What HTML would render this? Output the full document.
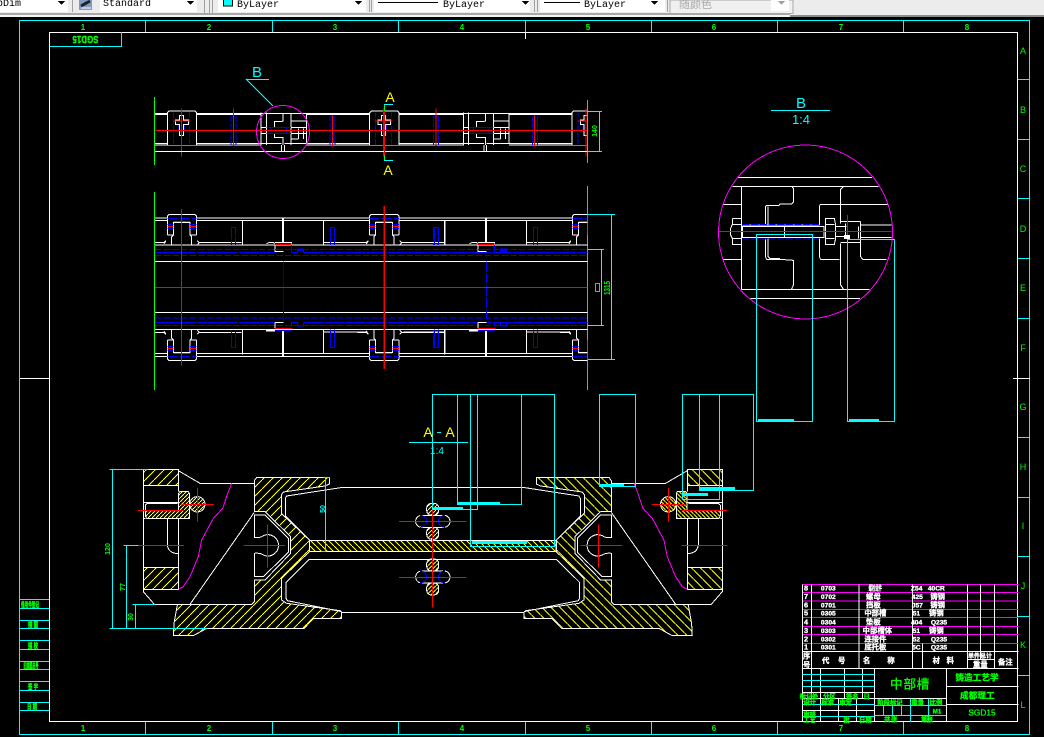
<!DOCTYPE html>
<html><head><meta charset="utf-8"><style>
html,body{margin:0;padding:0;background:#000;width:1044px;height:737px;overflow:hidden}
svg{display:block}
text{font-family:"Liberation Sans","Noto Sans CJK SC",sans-serif;shape-rendering:auto}
.m{font-family:"Liberation Mono","Noto Sans CJK SC",monospace;font-size:10px;fill:#000}
.g{fill:#00ff00;font-weight:bold;text-anchor:middle}
.w{fill:#fff;font-weight:bold;text-anchor:middle}
.c{fill:#00ffff;text-anchor:middle}
.y{fill:#ffff00;text-anchor:middle}
.hv{stroke:#00ff00;stroke-width:.4px}
</style></head><body>
<svg width="1044" height="737" viewBox="0 0 1044 737" xmlns="http://www.w3.org/2000/svg" shape-rendering="crispEdges">
<defs>
<pattern id="h1" patternUnits="userSpaceOnUse" width="27" height="27"><path d="M0 27L27 0" stroke="#ff0" stroke-width="3"/></pattern>
<pattern id="h2" patternUnits="userSpaceOnUse" width="18" height="18"><path d="M0 0L18 18" stroke="#ff0" stroke-width="3"/></pattern>
<pattern id="h3" patternUnits="userSpaceOnUse" width="12" height="12"><path d="M0 12L12 0" stroke="#ff0" stroke-width="3"/></pattern>
<clipPath id="topclip"><rect x="0" y="0" width="1296" height="210"/></clipPath>
<clipPath id="midclip"><rect x="45" y="0" width="1297" height="630"/></clipPath>

<g id="per12" fill="none" stroke-width="3">
  <path d="M0 57H37M125 57H318M455 57H607" stroke="#fff" stroke-width="6"/>
  <path d="M0 146H320M0 150H320M455 146H607M455 150H607M318 146H380M388 146H455M318 55H455" stroke="#fff"/>
  <path d="M37 150V53L42 48H120L125 53V150" stroke="#fff" fill="#000"/>
  <path d="M55 52V150M103 52V150" stroke="#00f" stroke-dasharray="16 4"/>
  <path d="M70 85V110M88 85V110" stroke="#00f"/>
  <path d="M73 62H85V75H100V88H85V122H73V88H62V75H73Z" stroke="#fff" fill="#000"/>
  <path d="M79 40V185" stroke="#f00"/><path d="M55 78H105" stroke="#f00"/>
  <path d="M228 65V150M243 65V150" stroke="#00f" stroke-dasharray="14 4"/>
  <path d="M226 66H246" stroke="#00f"/>
  <path d="M236 40V152" stroke="#f00"/>
  <path d="M525 65V150M540 65V150" stroke="#00f" stroke-dasharray="14 4"/>
  <path d="M522 66H543" stroke="#00f"/>
  <path d="M532 60V155" stroke="#f00"/>
  <path d="M318 53V150M334 53V150M408 55V150M455 57V146M384 55V78L378 80H358V98M358 115V128H384V150M380 150V168M388 150V168M318 98H455M318 115H455M408 78H455M430 100V132M445 100V132M408 132H430" stroke="#fff"/>
  <path d="M335 98H408M335 115H408M348 98V115M395 98V115" stroke="#00f"/>
</g>

<g id="blockT" fill="none" stroke-width="3">
  <path d="M45 187H72L78 182L72 192M172 182L178 188H305M172 195L178 188" stroke="#fff"/>
  <path d="M82 165V108L87 103H165L170 108V165M82 165H100M150 165H170" stroke="#fff" fill="#000"/>
  <path d="M100 126V165L95 170V195M150 126V165L155 170V195" stroke="#fff"/>
  <path d="M100 124H150" stroke="#f00"/>
  <path d="M100 127H150" stroke="#fff"/>
  <path d="M82 115H170" stroke="#00f" stroke-dasharray="30 6"/>
  <path d="M82 133H100M150 133H170M82 146H100M150 146H170" stroke="#00f"/>
  <path d="M82 140H100M150 140H170" stroke="#f00"/>
  <path d="M274 142H287V195M274 142V195" stroke="#00f" stroke-dasharray="36 5"/>
  <path d="M307 122V195" stroke="#fff"/>
</g>

<g id="half" fill="none" stroke="#fff" stroke-width="3">
  <path d="M130 238H235V287H130Z" fill="url(#h1)"/>
  <path d="M130 533H235V598H130Z" fill="url(#h1)"/>
  <path d="M236 310L240 304H264L268 310V385H140L136 378V362H236Z" fill="url(#h3)"/>
  <circle cx="292" cy="343" r="23" fill="url(#h3)"/>
  <path d="M463 272L470 262H688V282L675 288L550 306L544 314V370L628 450V485L545 565V630L560 640L720 662L725 667V686H640L620 707L612 715H320L280 737H220L222 700L232 645L235 643H455L463 635V570H495L572 490V440L495 365H463Z" fill="url(#h1)"/>
  <path d="M130 238V605L163 643H455M235 242L300 280H463M130 337H235M130 385H136M235 287V304M235 385V598M202 385V465Q205 490 235 491M463 367L270 643"/>
  <path d="M463 442Q480 445 490 437A32 32 0 1 1 490 495Q480 488 463 490V560H490L565 487V445L495 375H463Z" fill="#000"/>
  <path d="M722 293L560 318L556 325V378L628 450M722 293H1000M628 508L558 577V625L562 632L725 665M725 667H1000M628 508H1000"/>
  <path d="M142 340H232M142 340L136 345V362" />
  <path d="M114 361H252M244 343H342M292 294V395M114 466H252M430 466H555M502 403V532" stroke="#f00"/>
  <path d="M395 280L385 305L368 355L340 385L305 450L295 500L270 560L250 590L235 598" stroke="#f0f"/>
</g>
</defs>

<!-- toolbar -->
<rect x="0" y="0" width="1044" height="17" fill="#ececec"/>
<rect x="0" y="13" width="790" height="2" fill="#a8a8a8"/>
<rect x="790" y="15" width="254" height="2" fill="#8c8c8c"/>
<rect x="0" y="15" width="790" height="2" fill="#f4f4f4"/>
<path d="M72.500 0V12M204.500 0V13M209.500 0V13M212.500 0V13M369.500 0V12M371.500 0V12M534.500 0V12M537.500 0V12M667.500 0V12" stroke="#a0a0a0"/>
<rect x="0" y="0" width="68" height="12" fill="#fff"/>
<rect x="100" y="0" width="97" height="12" fill="#fff"/>
<rect x="218" y="0" width="148" height="12" fill="#fff"/>
<rect x="374" y="0" width="156" height="12" fill="#fff"/>
<rect x="540" y="0" width="125" height="12" fill="#fff"/>
<rect x="670" y="0" width="123" height="13.500" fill="#f0f0f0" stroke="#a8a8a8"/>
<rect x="771" y="0" width="18" height="11" fill="#fff"/>
<rect x="79" y="0" width="13" height="10" fill="#7f9bc4"/><path d="M81 6L90 1" stroke="#222" stroke-width="3"/><path d="M81 8H91" stroke="#fff"/>
<text class="m" x="-3" y="6">bDim</text>
<text class="m" x="103" y="6">Standard</text>
<rect x="223.500" y="-1" width="9" height="7" fill="#00ffff" stroke="#000"/>
<text class="m" x="237" y="7">ByLayer</text>
<path d="M378 2.500H438" stroke="#000"/><text class="m" x="443" y="7">ByLayer</text>
<path d="M544 2.500H580" stroke="#000"/><text class="m" x="584" y="7">ByLayer</text>
<text x="679" y="8" font-size="11" fill="#a8a8a8">随颜色</text>
<g fill="#000"><path d="M58 1H65L61.500 5Z"/><path d="M187 1H194L190.500 5Z"/><path d="M355 1H362L358.500 5Z"/><path d="M522 1H529L525.500 5Z"/><path d="M651 1H658L654.500 5Z"/></g>
<path d="M778 1H785L781.500 5Z" fill="#a0a0a0"/>

<!-- drawing frame -->
<rect x="19.500" y="20.500" width="1010" height="714" fill="none" stroke="#00ffff"/>
<rect x="49.500" y="32.500" width="968" height="689" fill="none" stroke="#fff"/>
<path d="M145.500 20V32M272.500 20V32M398.500 20V32M525.500 20V32M651.500 20V32M777.500 20V32M903.500 20V32M145.500 722V735M272.500 722V735M398.500 722V735M525.500 722V735M651.500 722V735M777.500 722V735M903.500 722V735" stroke="#00ffff"/>
<path d="M1018 79.500H1030M1018 139.500H1030M1018 198.500H1030M1018 258.500H1030M1018 318.500H1030M1018 437.500H1030M1018 497.500H1030M1018 556.500H1030M1018 616.500H1030M1018 675.500H1030" stroke="#00ffff"/>
<path d="M20 378.500H50M1013 378.500H1030M525.500 32V39" stroke="#fff"/>
<path d="M49.500 46.500H121.500V32" stroke="#00ffff" fill="none"/>
<text class="g hv" font-size="10" transform="translate(85.500 36) rotate(180)" textLength="26" lengthAdjust="spacingAndGlyphs">SGD15</text>
<g class="g" font-size="8">
<text x="83" y="30">1</text><text x="209" y="30">2</text><text x="335" y="30">3</text><text x="462" y="30">4</text><text x="588" y="30">5</text><text x="714" y="30">6</text><text x="841" y="30">7</text><text x="967" y="30">8</text>
<text x="83" y="731">1</text><text x="209" y="731">2</text><text x="335" y="731">3</text><text x="462" y="731">4</text><text x="588" y="731">5</text><text x="714" y="731">6</text><text x="841" y="731">7</text><text x="967" y="731">8</text>
<g style="font-weight:normal" font-size="9">
<text x="1023" y="54">A</text><text x="1023" y="113">B</text><text x="1023" y="172">C</text><text x="1023" y="232">D</text><text x="1023" y="291">E</text><text x="1023" y="351">F</text><text x="1023" y="410">G</text><text x="1023" y="470">H</text><text x="1023" y="529">I</text><text x="1023" y="589">J</text><text x="1023" y="648">K</text><text x="1023" y="708">L</text>
</g></g>

<!-- left side table -->
<path d="M20 599.500H49M20 608.500H49M20 620.500H49M20 628.500H49M20 640.500H49M20 649.500H49M20 661.500H49M20 669.500H49M20 681.500H49M20 690.500H49M20 702.500H49M20 710.500H49" stroke="#00ffff"/>
<g class="g hv" font-size="7">
<text x="30" y="607" textLength="18" lengthAdjust="spacingAndGlyphs">借用件登记</text>
<text x="33" y="627" textLength="10" lengthAdjust="spacingAndGlyphs">描 图</text>
<text x="33" y="648" textLength="10" lengthAdjust="spacingAndGlyphs">描 校</text>
<text x="31" y="668" textLength="15" lengthAdjust="spacingAndGlyphs">旧底图总号</text>
<text x="33" y="689" textLength="10" lengthAdjust="spacingAndGlyphs">签 字</text>
<text x="32" y="709" textLength="10" lengthAdjust="spacingAndGlyphs">日 期</text>
</g>

<!-- top view -->
<path d="M154.500 97V165M587.500 100V163" stroke="#00ff00"/>
<g transform="translate(155 95) scale(.33333)">
  <g clip-path="url(#topclip)">
    <use href="#per12"/><use href="#per12" x="607"/><use href="#per12" x="1214"/>
  </g>
  <path d="M0 169H1296" stroke="#fff" stroke-width="3"/>
  <path d="M0 106H1296" stroke="#f00" stroke-width="3"/>
</g>
<circle cx="283" cy="132" r="26.500" fill="none" stroke="#f0f"/>
<path d="M246 79.500H269M246 79L273 106" stroke="#00ffff"/>
<text class="c" x="257" y="77" font-size="15">B</text>
<path d="M384.500 105V155" stroke="#f00"/>
<path d="M384.500 104V111M384.500 155V160.500" stroke="#00ff00"/>
<path d="M384 104.500H393M384 160.500H393" stroke="#00ffff"/>
<text class="y" x="390" y="102" font-size="14">A</text>
<text class="y" x="388" y="175" font-size="14">A</text>
<path d="M587 111.500H602M587 151.500H602M599.500 111V152" stroke="#00ffff"/>
<text class="g" font-size="7" transform="translate(597 131) rotate(-90)" text-anchor="middle">140</text>

<!-- plan view -->
<path d="M154.500 192V390M587.500 186V390" stroke="#00ff00"/>
<g transform="translate(140 180) scale(.33333)" fill="none" stroke-width="3">
  <path d="M45 114H1342M45 122H1342M45 195H1342M45 244H1342M45 397H1342M45 448H1342M45 520H1342M45 529H1342" stroke="#fff"/>
  <g clip-path="url(#midclip)">
    <use href="#blockT"/><use href="#blockT" x="607"/><use href="#blockT" x="1215"/>
    <g transform="translate(0 644) scale(1 -1)"><use href="#blockT" y="-1"/><use href="#blockT" x="607" y="-1"/><use href="#blockT" x="1215" y="-1"/></g>
  </g>
  <path d="M550 122V195M915 122V195M1160 122V195M550 448V520M915 448V520M1160 448V520M550 187H680M790 187H915M1160 187H1285M550 456H680M790 456H915M1160 456H1285" stroke="#fff"/>
  <path d="M571 142H584V195M571 142V195M883 142H896V195M883 142V195M1180 142H1193V195M1180 142V195M571 502H584V448M571 502V448M883 502H896V448M883 502V448M1180 502H1193V448M1180 502V448" stroke="#00f"/>
  <path d="M429 115V195M429 449V528M1038 115V195M1038 449V528" stroke="#fff" stroke-width="6"/>
  <path d="M45 208.500H1342M45 226H1342M45 414.500H1342M45 436H1342" stroke="#00f" stroke-dasharray="20 6"/>
  <path d="M490 217H1342M45 217H405M490 427H1342M45 427H405" stroke="#00f" stroke-dasharray="60 3"/>
  <path d="M430 245V425" stroke="#00a"/>
  <path d="M1039 245V425" stroke="#00f" stroke-dasharray="30 6"/>
  <g id="conn">
    <path d="M380 191L388 187H400L405 191M405 187H455V195M405 195V215H430M405 428H430M405 428V450M378 452H405" stroke="#fff"/>
    <path d="M378 452H405" stroke="#fff" stroke-width="6"/>
    <path d="M405 190H455M405 208H430M455 195V217H472V207H490V217M405 452H455M455 440V428H472V438H490V428" stroke="#00f"/>
    <path d="M472 209H490" stroke="#00f" stroke-width="8"/>
    <path d="M405 193H455M403 445H458" stroke="#f00"/>
  </g>
  <use href="#conn" x="609"/>
  <path d="M45 322H1342M124 87V557" stroke="#f00" stroke-width="3"/>
  <path d="M733 78V567" stroke="#f00" stroke-width="4"/>
  <path d="M1342 103H1425M1342 208H1392M1342 436H1392M1342 539H1425M1415 103V539M1384 208V436" stroke="#00ffff"/>
</g>
<rect x="595.500" y="283.500" width="4" height="8" fill="none" stroke="#00ff00"/>
<text class="g" font-size="8" transform="translate(610 288) rotate(-90)" textLength="14" lengthAdjust="spacingAndGlyphs">1315</text>

<!-- detail B -->
<path d="M771 110.500H830" stroke="#00ffff"/>
<text class="c" x="801" y="108" font-size="15">B</text>
<text class="c" x="801" y="124" font-size="13">1:4</text>
<g transform="translate(700 130) scale(.33333)" fill="none" stroke="#fff" stroke-width="3">
  <path d="M113 142H516M97 169H535M125 169V478M70 223H125M70 388H125M125 478H508M152 505H480"/>
  <path d="M275 169L281 176V215L275 222H240L237 226H200L196 230V285M204 230V285M196 325V380L200 388H240L280 391V465L275 477M204 325V380L210 385H240"/>
  <path d="M358 285V228L362 223H565M430 170L422 178V280M422 340V465L430 477M358 325V380L362 388H418M482 285H575M482 322H575M482 274V380L488 388H560"/>
  <path d="M97 265H125M97 265V283L92 295V315L97 325V344H125M97 283H125M97 325H125"/>
  <path d="M127 290H372V322H127ZM127 285H358M253 290V322"/>
  <path d="M376 265H403L407 285V325L403 344H376ZM376 283H403M376 325H403M407 290H440M407 320H440M422 274H482M422 338H482M437 280V320M475 290V325"/>
  <path d="M127 283H358M127 327H358" stroke="#00f" stroke-dasharray="22 4"/>
  <path d="M55 304H575M442 255V315" stroke="#f00"/>
  <rect x="433" y="316" width="16" height="10" fill="#fff" stroke="#fff"/>
</g>
<circle cx="805.500" cy="232" r="87" fill="none" stroke="#f0f"/>

<!-- section A-A -->
<g transform="translate(100 390) scale(.33333)"><use href="#half"/></g>
<g transform="translate(865.600 0) scale(-1 1) translate(100 390) scale(.33333)"><use href="#half"/></g>
<g transform="translate(100 390) scale(.33333)" fill="none" stroke-width="3">
  <rect x="628" y="451" width="740" height="33" fill="url(#h2)" stroke="#fff"/>
  <g id="bolt">
    <rect x="980" y="340" width="36" height="36" rx="14" fill="url(#h3)" stroke="#fff"/>
    <rect x="980" y="412" width="36" height="36" rx="14" fill="url(#h3)" stroke="#fff"/>
    <path d="M965 376H1032M965 412H1032M965 376A18 18 0 0 0 965 412M1032 376A18 18 0 0 1 1032 412" stroke="#fff" fill="#000"/>
    <path d="M960 376A20 18 0 0 1 960 412M1035 376A20 18 0 0 0 1035 412" stroke="#00f"/>
    <path d="M897 395H1100" stroke="#f00"/>
  </g>
  <use href="#bolt" y="167"/>
  <path d="M998 360V653" stroke="#f00" stroke-width="3"/>
  <path d="M28 238H145M37 238V715M28 715H320M70 466H115M79 466V715M97 643H165M106 643V715M670 262H690M676 262V484M665 484H680" stroke="#00ffff"/>
</g>
<g fill="none" stroke="#00ffff">
  <rect x="756.500" y="234.500" width="56" height="187"/>
  <rect x="847.500" y="239.500" width="47" height="182"/>
  <rect x="682.500" y="394.500" width="37" height="105"/>
  <rect x="699.500" y="394.500" width="54" height="96"/>
  <rect x="432.500" y="394.500" width="45" height="115"/>
  <rect x="457.500" y="394.500" width="64" height="110"/>
  <rect x="470.500" y="394.500" width="84" height="152"/>
  <rect x="599.500" y="394.500" width="36" height="92"/>
</g>
<g fill="#00ffff">
  <rect x="758" y="419" width="36" height="3"/><rect x="849" y="419" width="30" height="3"/>
  <rect x="434" y="507" width="29" height="3"/><rect x="458" y="502" width="42" height="3"/>
  <rect x="472" y="541" width="55" height="3"/><rect x="600" y="484" width="24" height="3"/>
  <rect x="683" y="493" width="25" height="3"/><rect x="700" y="487" width="35" height="3"/>
</g>
<g class="g" font-size="7">
<text transform="translate(110 549) rotate(-90)">120</text>
<text transform="translate(125 587) rotate(-90)">77</text>
<text transform="translate(133 617) rotate(-90)">30</text>
</g>
<text class="c" font-size="7" transform="translate(325 509) rotate(-90)" style="font-weight:bold">50</text>
<path d="M409 442.500H468M437 432.500H441" stroke="#00ffff"/>
<text class="y" x="428" y="437" font-size="14">A</text>
<text class="y" x="450" y="437" font-size="14">A</text>
<text class="c" x="437" y="454" font-size="10">1:4</text>

<!-- title block -->
<g transform="translate(795 575) scale(.33333)" fill="none" stroke-width="3">
  <path d="M22 28H670M22 52H670M22 78H670M22 103H670M22 127H670M22 154H670M22 178H670M22 205H670" stroke="#f0f"/>
  <path d="M22 28V441M49 28V280M192 28V280M352 28V280M382 205V280M517 28V280M556 28V253M598 28V280M22 229H670M22 280H670M517 253H598" stroke="#fff"/>
  <path d="M49 280V370M76 280V441M148 280V370M202 280V370M130 370V441M184 370V441M238 280V441M454 280V441M22 352H238M22 370H454M22 406H238M454 334H670M454 388H670" stroke="#fff"/>
  <path d="M22 298H238M22 316H238M22 334H238M22 388H238M22 424H238M238 391H454M238 421H454M265 391V421M292 391V421M319 391V421M346 370V441M400 370V441" stroke="#00ffff"/>
  <g class="w" style="stroke:#fff;stroke-width:1px" font-size="22">
    <text x="33" y="47">8</text><text x="33" y="72">7</text><text x="33" y="97">6</text><text x="33" y="122">5</text><text x="33" y="148">4</text><text x="33" y="174">3</text><text x="33" y="199">2</text><text x="33" y="223">1</text>
    <g font-size="20"><text x="100" y="47">0703</text><text x="100" y="72">0702</text><text x="100" y="97">0701</text><text x="100" y="122">0305</text><text x="100" y="148">0304</text><text x="100" y="174">0303</text><text x="100" y="199">0302</text><text x="100" y="223">0301</text></g>
    <text x="241" y="47" textLength="40" lengthAdjust="spacingAndGlyphs">螺栓组件</text><text x="235" y="72">螺母</text><text x="235" y="97">挡板</text><text x="241" y="122">中部槽</text><text x="235" y="148">垫板</text><text x="247" y="174">中部槽体</text><text x="241" y="199">连接件</text><text x="241" y="223">底托板</text>
    <g font-size="20"><text x="365" y="47">Z54</text><text x="367" y="72">425</text><text x="367" y="97">J57</text><text x="364" y="122">51</text><text x="365" y="148">404</text><text x="364" y="174">51</text><text x="364" y="199">52</text><text x="364" y="223">5C</text></g>
    <text x="424" y="47" font-size="20">40CR</text><text x="428" y="72">铸钢</text><text x="428" y="97">铸钢</text><text x="424" y="122">铸钢</text><text x="432" y="148" font-size="20">Q235</text><text x="424" y="174">铸钢</text><text x="432" y="199" font-size="20">Q235</text><text x="432" y="223" font-size="20">Q235</text>
    <text x="35" y="250">序</text><text x="35" y="278">号</text>
    <text x="92" y="264">代</text><text x="140" y="264">号</text>
    <text x="215" y="264">名</text><text x="288" y="264">称</text>
    <text x="424" y="264">材</text><text x="466" y="264">料</text>
    <text x="537" y="249" font-size="18">单件</text><text x="573" y="249" font-size="18">总计</text>
    <text x="556" y="276">重量</text><text x="631" y="268">备注</text>
  </g>
  <g class="g" style="stroke:#0f0;stroke-width:1px" font-size="19">
    <text x="345" y="340" font-size="38" style="letter-spacing:2px;font-weight:normal">中部槽</text>
    <text x="546" y="317" font-size="26">铸造工艺学</text>
    <text x="547" y="370" font-size="26">成都理工</text>
    <text x="561" y="422" font-size="25" style="font-weight:normal">SGD15</text>
    <text x="33" y="371">标记</text><text x="60" y="371">处</text><text x="103" y="371">分区</text><text x="172" y="371">签名</text><text x="215" y="371">日</text>
    <text x="44" y="388">设计</text><text x="98" y="388">标准</text><text x="152" y="388">审定</text>
    <text x="285" y="389">阶段标记</text><text x="368" y="389">重量</text><text x="423" y="389">比例</text>
    <text x="426" y="416">M1</text>
    <text x="44" y="424">审核</text><text x="44" y="441">工艺</text><text x="155" y="441">批</text><text x="211" y="441">日期</text>
    <text x="287" y="440" textLength="40" lengthAdjust="spacing">共 张</text><text x="396" y="440" textLength="36" lengthAdjust="spacing">第 张</text>
  </g>
</g>
</svg>
</body></html>
